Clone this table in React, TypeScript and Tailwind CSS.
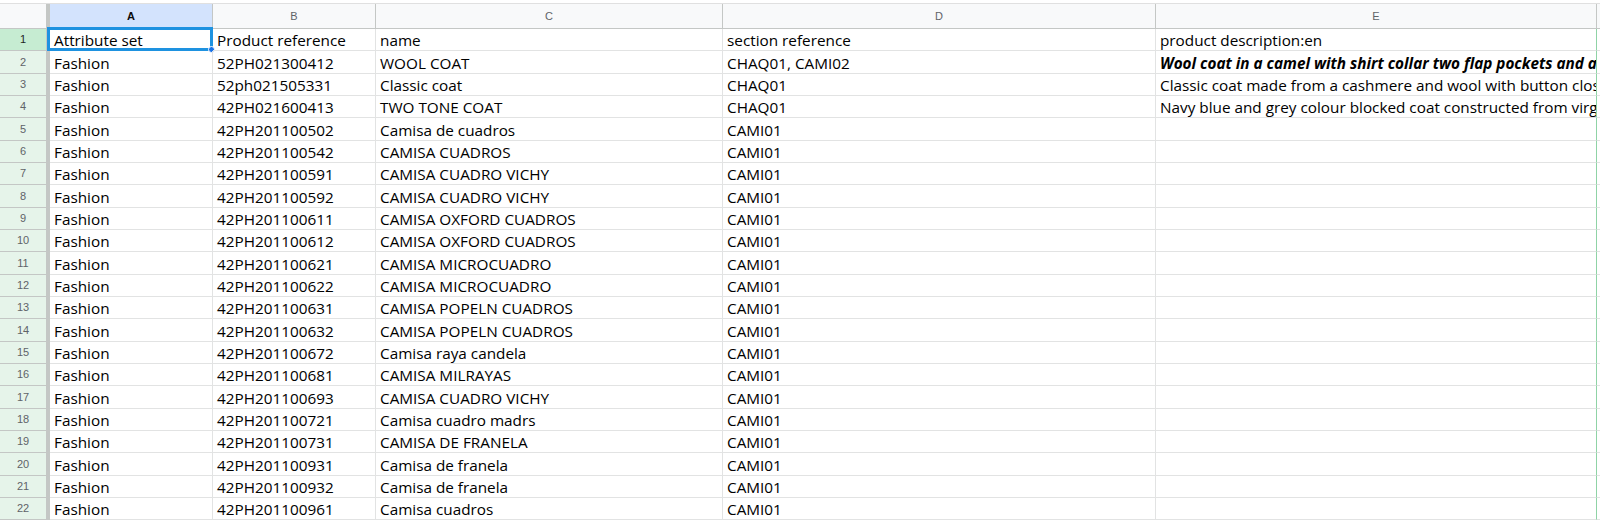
import React from "react";

const cols = [
  { letter: "A", w: "w-[163px]" },
  { letter: "B", w: "w-[163px]" },
  { letter: "C", w: "w-[347px]" },
  { letter: "D", w: "w-[433px]" },
  { letter: "E", w: "w-[441px]" },
];

type Row = [string, string, string, string, string];

const rows: Row[] = [
  ["Attribute set", "Product reference", "name", "section reference", "product description:en"],
  ["Fashion", "52PH021300412", "WOOL COAT", "CHAQ01, CAMI02", "Wool coat in a camel with shirt collar two flap pockets and a button fastening"],
  ["Fashion", "52ph021505331", "Classic coat", "CHAQ01", "Classic coat made from a cashmere and wool with button closure"],
  ["Fashion", "42PH021600413", "TWO TONE COAT", "CHAQ01", "Navy blue and grey colour blocked coat constructed from virgin wool"],
  ["Fashion", "42PH201100502", "Camisa de cuadros", "CAMI01", ""],
  ["Fashion", "42PH201100542", "CAMISA CUADROS", "CAMI01", ""],
  ["Fashion", "42PH201100591", "CAMISA CUADRO VICHY", "CAMI01", ""],
  ["Fashion", "42PH201100592", "CAMISA CUADRO VICHY", "CAMI01", ""],
  ["Fashion", "42PH201100611", "CAMISA OXFORD CUADROS", "CAMI01", ""],
  ["Fashion", "42PH201100612", "CAMISA OXFORD CUADROS", "CAMI01", ""],
  ["Fashion", "42PH201100621", "CAMISA MICROCUADRO", "CAMI01", ""],
  ["Fashion", "42PH201100622", "CAMISA MICROCUADRO", "CAMI01", ""],
  ["Fashion", "42PH201100631", "CAMISA POPELN CUADROS", "CAMI01", ""],
  ["Fashion", "42PH201100632", "CAMISA POPELN CUADROS", "CAMI01", ""],
  ["Fashion", "42PH201100672", "Camisa raya candela", "CAMI01", ""],
  ["Fashion", "42PH201100681", "CAMISA MILRAYAS", "CAMI01", ""],
  ["Fashion", "42PH201100693", "CAMISA CUADRO VICHY", "CAMI01", ""],
  ["Fashion", "42PH201100721", "Camisa cuadro madrs", "CAMI01", ""],
  ["Fashion", "42PH201100731", "CAMISA DE FRANELA", "CAMI01", ""],
  ["Fashion", "42PH201100931", "Camisa de franela", "CAMI01", ""],
  ["Fashion", "42PH201100932", "Camisa de franela", "CAMI01", ""],
  ["Fashion", "42PH201100961", "Camisa cuadros", "CAMI01", ""],
];

export default function App() {
  return (
    <div className="w-[1600px] h-[521px] overflow-hidden bg-white pt-[3px]">
      {/* column header row */}
      <div className="flex h-[26px] border-t border-[#e0e0e0]">
        <div className="w-[50px] shrink-0 bg-[#f8f9fa] border-r-[4px] border-b border-[#c4c7c5]" />
        {cols.map((c, i) => (
          <div
            key={c.letter}
            className={`${c.w} shrink-0 flex items-center justify-center border-r border-b border-[#c4c7c5] text-[11px] ${
              i === 0
                ? "bg-[#d3e3fd] text-[#0b0b0b] font-bold"
                : "bg-[#f8f9fa] text-[#5f6368]"
            }`}
            style={{ fontFamily: "Arial, 'Liberation Sans', sans-serif" }}
          >
            {c.letter}
          </div>
        ))}
        <div className="flex-1 bg-[#f8f9fa] border-b border-[#c4c7c5]" />
      </div>
      {rows.map((r, ri) => (
        <div key={ri} className="flex h-[22.33px]">
          <div
            className={`w-[50px] shrink-0 flex items-center justify-center border-r-[4px] border-r-[#c4c7c5] border-b border-b-[#c4c7c5] text-[11px] ${
              ri === 0 ? "bg-[#c6ecd2] text-[#1f1f1f]" : "bg-[#e6f4ea] text-[#5f6368]"
            }`}
            style={{ fontFamily: "Arial, 'Liberation Sans', sans-serif" }}
          >
            {ri + 1}
          </div>
          {cols.map((c, ci) => (
            <div
              key={c.letter}
              className={`${c.w} shrink-0 relative border-b border-[#e2e3e3] ${
                ci === 4 ? "border-r border-r-[#8fd3a6] overflow-hidden" : "border-r border-r-[#e2e3e3]"
              }`}
            >
              <div
                className={`h-full flex items-end pl-[4px] whitespace-nowrap text-[15.3px] leading-[20px] text-black ${
                  ri === 1 && ci === 4 ? "font-bold italic" : ""
                }`}
                style={{ fontFamily: "'Open Sans', sans-serif" }}
              >
                {r[ci]}
              </div>
              {ri === 0 && ci === 0 && (
                <div className="absolute -left-[3px] -top-[2px] -right-[1px] -bottom-[1px] border-[3px] border-[#1e92e0] pointer-events-none">
                  <div className="absolute -right-[5px] -bottom-[5px] w-[7px] h-[7px] rounded-full bg-[#1a73e8] border border-white" />
                </div>
              )}
            </div>
          ))}
          <div className="flex-1 border-b border-[#e2e3e3]" />
        </div>
      ))}
    </div>
  );
}
